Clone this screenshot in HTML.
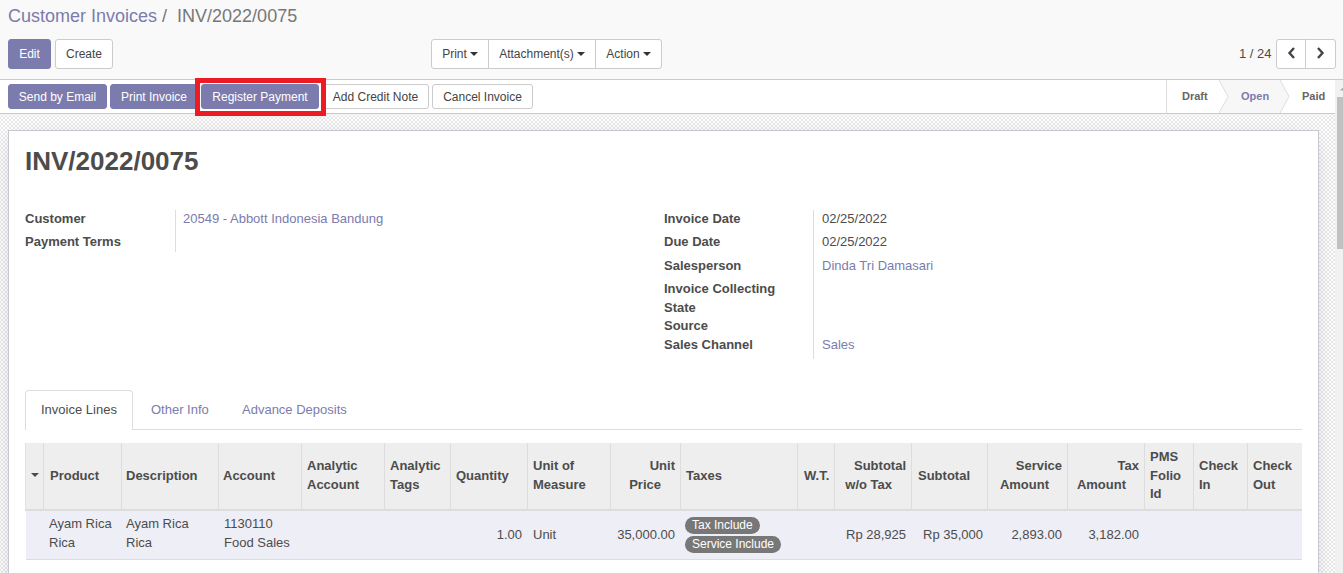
<!DOCTYPE html>
<html><head><meta charset="utf-8">
<style>
*{box-sizing:border-box;}
html,body{margin:0;padding:0;}
body{width:1343px;height:573px;overflow:hidden;position:relative;background:#fff;font-family:"Liberation Sans",sans-serif;font-size:13px;color:#4c4c4c;line-height:18.57px;}
.abs{position:absolute;}
.cp{position:absolute;left:0;top:0;width:1343px;height:80px;background:#f9f9f9;border-bottom:1px solid #cacaca;}
.bc{position:absolute;left:8px;top:4px;font-size:18px;line-height:24px;white-space:nowrap;}
.bc .lnk{color:#7c7bad;}
.bc .act{color:#777;}
.btn{position:absolute;height:30px;border:1px solid #ccc;border-radius:3px;background:#fff;color:#444;font-size:12px;text-align:center;line-height:28px;white-space:nowrap;}
.btn.pr{background:#7c7bad;border-color:#7c7bad;color:#fff;}
.sb .btn{height:25px;line-height:25px;font-size:12px;}
.caret{display:inline-block;width:0;height:0;border-top:4px solid #333;border-left:4px solid transparent;border-right:4px solid transparent;vertical-align:middle;margin-left:3px;position:relative;top:-1px;}
.scroll{position:absolute;left:0;top:80px;width:1335px;height:493px;overflow:hidden;background-color:#f5f5f5;background-image:conic-gradient(#e8e8e8 0 25%,#fdfdfd 0 50%,#e8e8e8 0 75%,#fdfdfd 0);background-size:4px 4px;background-position:3px 3px;}
.sbar{position:absolute;left:0;top:0;width:1335px;height:34px;background:#fff;border-bottom:1px solid #cacaca;}
.sheet{position:absolute;left:8px;top:50px;width:1311px;height:600px;background:#fff;border:1px solid #c8c8d3;box-shadow:0 5px 20px -8px rgba(0,0,0,0.25);}
.vscroll{position:absolute;left:1335px;top:80px;width:8px;height:493px;background:#f1f1f1;}
.thumb{position:absolute;left:2px;top:17px;width:6px;height:152px;background:#c1c1c1;}
.lbl{position:absolute;font-weight:bold;white-space:nowrap;}
.val{position:absolute;white-space:nowrap;}
.link{color:#7c7bad;}
.tag{position:absolute;height:17px;border-radius:8.5px;background:#777;color:#fff;font-size:12px;line-height:17px;padding-left:7px;white-space:nowrap;}
.st{font-size:11px;font-weight:bold;color:#666;white-space:nowrap;}
</style></head><body>
<div class="cp">
  <div class="bc"><span class="lnk">Customer Invoices</span><span class="act"> / &nbsp;INV/2022/0075</span></div>
  <div class="btn pr" style="left:8px;top:39px;width:43px;">Edit</div>
  <div class="btn" style="left:55px;top:39px;width:58px;">Create</div>
  <div class="btn" style="left:431px;top:39px;width:58px;border-radius:3px 0 0 3px;">Print<span class="caret"></span></div>
  <div class="btn" style="left:488px;top:39px;width:108px;border-radius:0;">Attachment(s)<span class="caret"></span></div>
  <div class="btn" style="left:595px;top:39px;width:67px;border-radius:0 3px 3px 0;">Action<span class="caret"></span></div>
  <div class="val" style="left:1239px;top:45px;color:#4c4c4c;">1 / 24</div>
  <div class="btn" style="left:1276px;top:39px;width:30px;border-radius:3px 0 0 3px;"><svg class="abs" style="left:10px;top:7px" width="9" height="12" viewBox="0 0 9 12"><path d="M7 1 L2.5 6 L7 11" fill="none" stroke="#444" stroke-width="2.4"/></svg></div>
  <div class="btn" style="left:1305px;top:39px;width:31px;border-radius:0 3px 3px 0;"><svg class="abs" style="left:10px;top:7px" width="9" height="12" viewBox="0 0 9 12"><path d="M2 1 L6.5 6 L2 11" fill="none" stroke="#444" stroke-width="2.4"/></svg></div>
</div>
<div class="scroll">
  <div class="sbar sb">
    <div class="btn pr" style="left:8px;top:4px;width:99px;">Send by Email</div>
    <div class="btn pr" style="left:110px;top:4px;width:88px;">Print Invoice</div>
    <div class="btn pr" style="left:201px;top:4px;width:118px;">Register Payment</div>
    <div class="btn" style="left:322px;top:4px;width:107px;">Add Credit Note</div>
    <div class="btn" style="left:432px;top:4px;width:101px;">Cancel Invoice</div>
    <div class="abs" style="left:1166px;top:0;width:169px;height:33px;border-left:1px solid #ddd;"></div>
    <svg class="abs" style="left:1167px;top:0" width="168" height="33" viewBox="0 0 168 33">
      <path d="M52 0 L61 16.5 L52 33 L113 33 L122 16.5 L113 0 Z" fill="#f7f7f7"/>
      <path d="M52 0 L61 16.5 L52 33 M113 0 L122 16.5 L113 33" fill="none" stroke="#ddd" stroke-width="1"/>
    </svg>
    <div class="abs st" style="left:1182px;top:7px;">Draft</div>
    <div class="abs st" style="left:1241px;top:7px;color:#7c7bad;">Open</div>
    <div class="abs st" style="left:1302px;top:7px;">Paid</div>
  </div>
  <div class="sheet"></div>
</div>

<!-- SHEET CONTENT -->
<div class="abs" style="left:25px;top:145px;font-size:26px;line-height:32px;font-weight:bold;color:#4c4c4c;white-space:nowrap;">INV/2022/0075</div>
<div class="lbl" style="left:25px;top:210px;">Customer</div>
<div class="lbl" style="left:25px;top:233px;">Payment Terms</div>
<div class="abs" style="left:175px;top:210px;width:1px;height:42px;background:#ddd;"></div>
<div class="val link" style="left:183px;top:210px;">20549 - Abbott Indonesia Bandung</div>
<div class="lbl" style="left:664px;top:210px;">Invoice Date</div>
<div class="lbl" style="left:664px;top:233px;">Due Date</div>
<div class="lbl" style="left:664px;top:257px;">Salesperson</div>
<div class="lbl" style="left:664px;top:280px;">Invoice Collecting</div>
<div class="lbl" style="left:664px;top:299px;">State</div>
<div class="lbl" style="left:664px;top:317px;">Source</div>
<div class="lbl" style="left:664px;top:336px;">Sales Channel</div>
<div class="abs" style="left:813px;top:210px;width:1px;height:149px;background:#ddd;"></div>
<div class="val" style="left:822px;top:210px;">02/25/2022</div>
<div class="val" style="left:822px;top:233px;">02/25/2022</div>
<div class="val link" style="left:822px;top:257px;">Dinda Tri Damasari</div>
<div class="val link" style="left:822px;top:336px;">Sales</div>
<!-- tabs -->
<div class="abs" style="left:25px;top:429px;width:1277px;height:1px;background:#ddd;"></div>
<div class="abs" style="left:25px;top:390px;width:108px;height:40px;background:#fff;border:1px solid #ddd;border-bottom:none;border-radius:4px 4px 0 0;"></div>
<div class="val" style="left:41px;top:401px;">Invoice Lines</div>
<div class="val link" style="left:151px;top:401px;">Other Info</div>
<div class="val link" style="left:242px;top:401px;">Advance Deposits</div>
<!-- table -->
<div class="abs" style="left:25px;top:443px;width:1277px;height:66px;background:#eee;"></div>
<div class="abs" style="left:25px;top:509px;width:1277px;height:2px;background:#ddd;"></div>
<div class="abs" style="left:26px;top:511px;width:1276px;height:48px;background:#eeeef6;"></div>
<div class="abs" style="left:26px;top:559px;width:1276px;height:1px;background:#ddd;"></div>
<div class="abs" style="left:25px;top:443px;width:1px;height:66px;background:#e2e2e2;"></div>
<div class="abs" style="left:43px;top:443px;width:1px;height:66px;background:#ddd;"></div>
<div class="abs" style="left:121px;top:443px;width:1px;height:66px;background:#ddd;"></div>
<div class="abs" style="left:218px;top:443px;width:1px;height:66px;background:#ddd;"></div>
<div class="abs" style="left:301px;top:443px;width:1px;height:66px;background:#ddd;"></div>
<div class="abs" style="left:384px;top:443px;width:1px;height:66px;background:#ddd;"></div>
<div class="abs" style="left:450px;top:443px;width:1px;height:66px;background:#ddd;"></div>
<div class="abs" style="left:527px;top:443px;width:1px;height:66px;background:#ddd;"></div>
<div class="abs" style="left:610px;top:443px;width:1px;height:66px;background:#ddd;"></div>
<div class="abs" style="left:680px;top:443px;width:1px;height:66px;background:#ddd;"></div>
<div class="abs" style="left:797px;top:443px;width:1px;height:66px;background:#ddd;"></div>
<div class="abs" style="left:834px;top:443px;width:1px;height:66px;background:#ddd;"></div>
<div class="abs" style="left:911px;top:443px;width:1px;height:66px;background:#ddd;"></div>
<div class="abs" style="left:987px;top:443px;width:1px;height:66px;background:#ddd;"></div>
<div class="abs" style="left:1067px;top:443px;width:1px;height:66px;background:#ddd;"></div>
<div class="abs" style="left:1144px;top:443px;width:1px;height:66px;background:#ddd;"></div>
<div class="abs" style="left:1193px;top:443px;width:1px;height:66px;background:#ddd;"></div>
<div class="abs" style="left:1247px;top:443px;width:1px;height:66px;background:#ddd;"></div>
<div class="abs" style="left:31px;top:473px;width:0;height:0;border-top:4px solid #4c4c4c;border-left:4px solid transparent;border-right:4px solid transparent;"></div>
<div class="lbl" style="left:50px;top:467px;">Product</div>
<div class="lbl" style="left:126px;top:467px;">Description</div>
<div class="lbl" style="left:223px;top:467px;">Account</div>
<div class="lbl" style="left:307px;top:457px;">Analytic<br>Account</div>
<div class="lbl" style="left:390px;top:457px;">Analytic<br>Tags</div>
<div class="lbl" style="left:456px;top:467px;">Quantity</div>
<div class="lbl" style="left:533px;top:457px;">Unit of<br>Measure</div>
<div class="lbl" style="left:686px;top:467px;">Taxes</div>
<div class="lbl" style="left:804px;top:467px;">W.T.</div>
<div class="lbl" style="left:918px;top:467px;">Subtotal</div>
<div class="lbl" style="left:1150px;top:448px;">PMS<br>Folio<br>Id</div>
<div class="lbl" style="left:1199px;top:457px;">Check<br>In</div>
<div class="lbl" style="left:1253px;top:457px;">Check<br>Out</div>
<div class="lbl" style="right:668px;top:457px;text-align:right;">Unit</div>
<div class="lbl" style="right:682px;top:476px;text-align:right;">Price</div>
<div class="lbl" style="right:437px;top:457px;text-align:right;">Subtotal</div>
<div class="lbl" style="right:451px;top:476px;text-align:right;">w/o Tax</div>
<div class="lbl" style="right:281px;top:457px;text-align:right;">Service</div>
<div class="lbl" style="right:294px;top:476px;text-align:right;">Amount</div>
<div class="lbl" style="right:204px;top:457px;text-align:right;">Tax</div>
<div class="lbl" style="right:217px;top:476px;text-align:right;">Amount</div>
<div class="val" style="left:49px;top:515px;">Ayam Rica<br>Rica</div>
<div class="val" style="left:126px;top:515px;">Ayam Rica<br>Rica</div>
<div class="val" style="left:224px;top:515px;">1130110<br>Food Sales</div>
<div class="val" style="left:533px;top:526px;">Unit</div>
<div class="val" style="left:846px;top:526px;">Rp 28,925</div>
<div class="val" style="left:923px;top:526px;">Rp 35,000</div>
<div class="val" style="right:821px;top:526px;text-align:right;">1.00</div>
<div class="val" style="right:668px;top:526px;text-align:right;">35,000.00</div>
<div class="val" style="right:281px;top:526px;text-align:right;">2,893.00</div>
<div class="val" style="right:204px;top:526px;text-align:right;">3,182.00</div>
<div class="tag" style="left:685px;top:517px;width:75px;">Tax Include</div>
<div class="tag" style="left:685px;top:536px;width:96px;">Service Include</div>
<div class="abs" style="left:195px;top:78px;width:131px;height:38px;border:5px solid #ed1c24;"></div>
<div class="vscroll"><div class="thumb"></div><svg class="abs" style="left:0;top:0" width="8" height="17"><path d="M8.5 7 L12 10.5 L5 10.5 Z" fill="#a3a3a3"/></svg></div>
</body></html>
